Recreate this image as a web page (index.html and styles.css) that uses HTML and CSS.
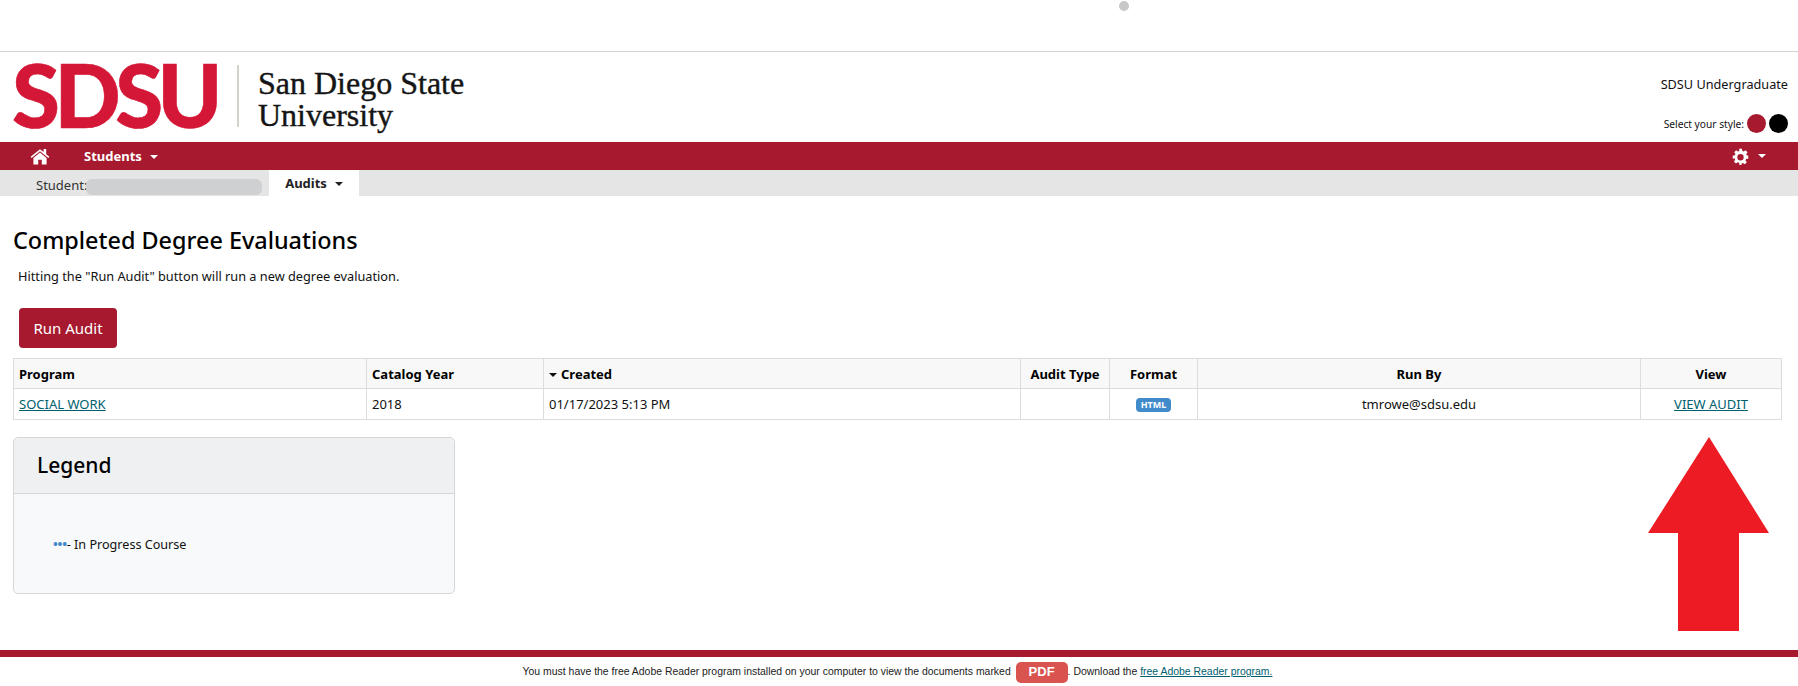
FILE: index.html
```html
<!DOCTYPE html>
<html lang="en">
<head>
<meta charset="utf-8">
<title>Completed Degree Evaluations</title>
<link rel="stylesheet" href="styles.css">
</head>
<body>
<div class="top-dot"></div>
<div class="topbar"></div>
<header class="header">
  <div class="logo">
    <span class="logo-mark">SDSU</span>
    <span class="logo-rule"></span>
    <span class="logo-name">San Diego State<br>University</span>
  </div>
  <div class="header-right">
    <div class="school">SDSU Undergraduate</div>
    <div class="style-pick">
      <span class="style-label">Select your style:</span>
      <span class="swatch swatch-red"></span>
      <span class="swatch swatch-black"></span>
    </div>
  </div>
</header>
<nav class="nav">
  <svg class="home" viewBox="0 0 20 18" aria-hidden="true"><path d="M10 2.2 0.6 9.8l1 1.3L10 4.3l8.4 6.8 1-1.3L16.2 7.2V2h-2.6v3.1L10 2.2zM10 5.6 3.4 11v6.6h4.8v-4.8h3.6v4.8h4.8V11L10 5.6z"/></svg>
  <span class="nav-item">Students<i class="caret"></i></span>
  <span class="nav-spacer"></span>
  <svg class="gear" viewBox="0 0 24 24" aria-hidden="true"><path fill-rule="evenodd" d="M10 1h4l.6 3.1 1.9.8 2.6-1.8 2.8 2.8-1.8 2.6.8 1.9L23 11v4l-3.1.6-.8 1.9 1.8 2.6-2.8 2.8-2.6-1.8-1.9.8L13.4 24h-2.8l-.6-3.1-1.9-.8-2.6 1.8-2.8-2.8 1.8-2.6-.8-1.9L1 15v-4l3.1-.6.8-1.9-1.8-2.6 2.8-2.8 2.6 1.8 1.9-.8L10 1zm2 7.5a4.5 4.5 0 1 0 0 9 4.5 4.5 0 0 0 0-9z"/></svg>
  <i class="caret gear-caret"></i>
</nav>
<div class="subnav">
  <span class="student">Student:</span><span class="redacted"></span>
  <span class="tab">Audits<i class="caret caret-dark"></i></span>
</div>
<main class="main">
  <h1 class="title">Completed Degree Evaluations</h1>
  <p class="intro">Hitting the "Run Audit" button will run a new degree evaluation.</p>
  <button class="run" type="button">Run Audit</button>
  <table class="audits">
    <colgroup>
      <col class="c1"><col class="c2"><col class="c3"><col class="c4"><col class="c5"><col class="c6"><col class="c7">
    </colgroup>
    <thead>
      <tr>
        <th>Program</th>
        <th>Catalog Year</th>
        <th><i class="caret caret-sort"></i>Created</th>
        <th class="mid">Audit Type</th>
        <th class="mid">Format</th>
        <th class="mid">Run By</th>
        <th class="mid">View</th>
      </tr>
    </thead>
    <tbody>
      <tr>
        <td><a href="#">SOCIAL WORK</a></td>
        <td>2018</td>
        <td>01/17/2023 5:13 PM</td>
        <td></td>
        <td class="mid"><span class="badge">HTML</span></td>
        <td class="mid">tmrowe@sdsu.edu</td>
        <td class="mid"><a href="#">VIEW AUDIT</a></td>
      </tr>
    </tbody>
  </table>
  <section class="legend">
    <h2 class="legend-head">Legend</h2>
    <div class="legend-body"><span class="dots">•••</span>- In Progress Course</div>
  </section>
</main>
<svg class="arrow" viewBox="0 0 121 194" aria-hidden="true"><path d="M61 0 121 96H91V194H30V96H0z"/></svg>
<footer class="footer">
  You must have the free Adobe Reader program installed on your computer to view the documents marked
  <span class="pdf">PDF</span>. Download the <a href="#">free Adobe Reader program.</a>
</footer>
</body>
</html>
```
FILE: styles.css
```css
* { box-sizing: border-box; }
html, body { margin: 0; padding: 0; }
body {
  font-family: "Noto Sans", "Open Sans", sans-serif;
  font-size: 13px;
  color: #111;
  background: #fff;
  height: 686px;
  overflow: hidden;
}
.top-dot {
  position: absolute;
  left: 1119px;
  top: 1px;
  width: 10px;
  height: 10px;
  border-radius: 50%;
  background: #c8c8c8;
}
.topbar { height: 52px; border-bottom: 1px solid #d2d2d2; }
.header {
  height: 90px;
  display: flex;
  justify-content: space-between;
  padding: 0 10px 0 12px;
}
.logo { display: flex; align-items: center; }
.logo-mark {
  font-family: Lato, sans-serif;
  font-weight: 900;
  font-size: 87px;
  line-height: 84px;
  letter-spacing: -5.5px;
  color: #d41736;
  width: 225px;
  margin-bottom: 5px;
  -webkit-text-stroke: 0.6px #d41736;
}
.logo-rule { width: 2px; height: 62px; background: #d3d3cc; margin-bottom: 3px; }
.logo-name {
  font-family: "Liberation Serif", serif;
  font-size: 32px;
  line-height: 32px;
  color: #151515;
  margin-left: 19px;
  margin-top: 3px;
  -webkit-text-stroke: 0.4px #151515;
}
.header-right {
  display: flex;
  flex-direction: column;
  align-items: flex-end;
  padding-top: 22px;
}
.school { font-size: 12.7px; line-height: 20px; }
.style-pick { display: flex; align-items: center; gap: 3px; margin-top: 20px; }
.style-label { font-size: 10.2px; }
.swatch { width: 19px; height: 19px; border-radius: 50%; }
.swatch-red { background: #a6192e; }
.swatch-black { background: #000; }
.nav {
  height: 28px;
  background: #a6192e;
  display: flex;
  align-items: center;
  padding: 0 32px 0 30px;
  color: #fff;
}
.home { width: 20px; height: 18px; fill: #fff; }
.nav-item { margin-left: 34px; font-weight: 700; font-size: 13px; }
.nav-spacer { flex: 1; }
.gear { width: 17px; height: 17px; fill: #fff; }
.caret {
  display: inline-block;
  width: 0;
  height: 0;
  border-left: 4px solid transparent;
  border-right: 4px solid transparent;
  border-top: 4px solid #fff;
  margin-left: 8px;
  vertical-align: 2px;
}
.gear-caret { margin-left: 9px; }
.caret-dark { border-top-color: #222; }
.caret-sort { border-top-color: #111; margin: 0 4px 0 0; }
.subnav {
  height: 26px;
  background: #e5e5e5;
  display: flex;
  align-items: stretch;
  padding-left: 36px;
  font-size: 13px;
  line-height: 30px;
  color: #333;
}
.student { width: 50px; }
.redacted {
  width: 176px;
  height: 16px;
  margin-top: 9px;
  background: #cfd0d2;
  border-radius: 6px;
}
.tab {
  margin-left: 7px;
  width: 90px;
  background: #fff;
  text-align: center;
  font-weight: 700;
  line-height: 26px;
  color: #222;
}
.main { padding: 0 17px 0 13px; }
.title {
  margin: 28px 0 0;
  font-weight: 500;
  font-size: 23.4px;
  line-height: 32px;
  color: #000;
}
.intro { margin: 10px 0 0 5px; line-height: 20px; font-size: 12.75px; }
.run {
  display: block;
  margin: 22px 0 10px 6px;
  width: 98px;
  height: 40px;
  border: 0;
  border-radius: 4px;
  background: #a6192e;
  color: #fff;
  font: 400 15px "Noto Sans", sans-serif;
}
.audits {
  width: 1768px;
  table-layout: fixed;
  border-collapse: collapse;
}
.c1 { width: 353px; }
.c2 { width: 177px; }
.c3 { width: 477px; }
.c4 { width: 89px; }
.c5 { width: 88px; }
.c6 { width: 443px; }
.c7 { width: 141px; }
.audits th, .audits td {
  border: 1px solid #dcdcdc;
  padding: 0 5px;
  text-align: left;
  font-size: 13px;
}
.audits th { height: 30px; background: #f8f8f8; font-weight: 700; color: #000; }
.audits td { height: 31px; }
.audits .mid { text-align: center; }
a { color: #00606e; text-decoration: underline; }
.badge {
  display: inline-block;
  background: #428bca;
  color: #fff;
  font-size: 9px;
  font-weight: 700;
  line-height: 14px;
  padding: 0 5px;
  border-radius: 4px;
  vertical-align: 1px;
}
.legend {
  margin-top: 17px;
  width: 442px;
  height: 157px;
  border: 1px solid #d6d6d6;
  border-radius: 5px;
  background: #f8f9fa;
  overflow: hidden;
}
.legend-head {
  margin: 0;
  height: 56px;
  padding-left: 23px;
  background: #eff0f2;
  border-bottom: 1px solid #d6d6d6;
  font-weight: 500;
  font-size: 21px;
  line-height: 54px;
  color: #000;
}
.legend-body { padding: 40px 0 0 39px; line-height: 20px; font-size: 12.6px; }
.dots { color: #428bca; font-size: 13px; font-weight: 700; letter-spacing: -0.3px; }
.arrow {
  position: absolute;
  left: 1648px;
  top: 437px;
  width: 121px;
  height: 194px;
  fill: #ed1c24;
}
.footer {
  position: absolute;
  left: 0;
  right: 0;
  top: 650px;
  height: 36px;
  padding-right: 3px;
  border-top: 7px solid #a6192e;
  text-align: center;
  font-family: "Liberation Sans", Arial, sans-serif;
  font-size: 10.45px;
  line-height: 30px;
  color: #222;
}
.pdf {
  display: inline-block;
  width: 52px;
  height: 21px;
  margin-left: 2px;
  border-radius: 5px;
  background: #d9534f;
  color: #fff;
  font-size: 13px;
  font-weight: 700;
  line-height: 20px;
  vertical-align: middle;
}
```
